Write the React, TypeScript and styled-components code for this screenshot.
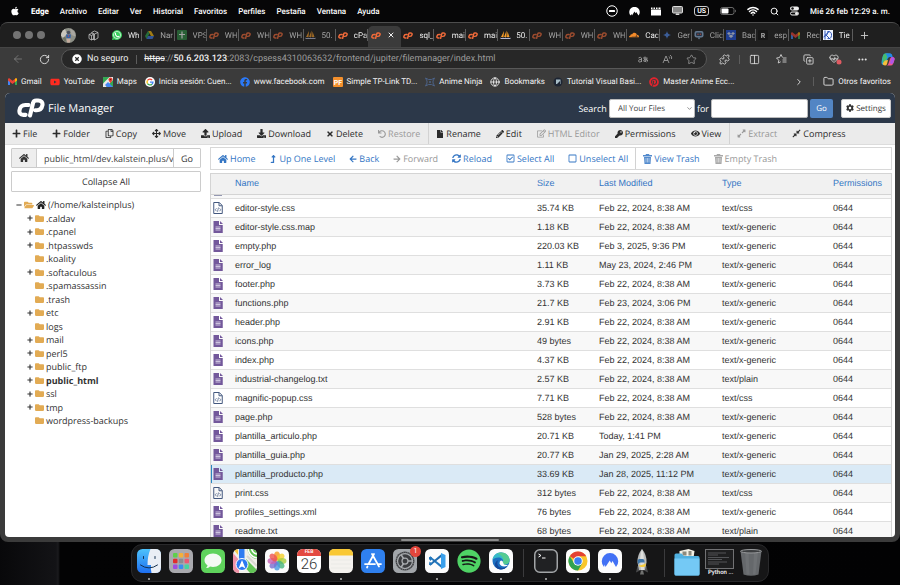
import React from 'react';
import styled, { createGlobalStyle, css } from 'styled-components';
import {
  FaApple, FaYoutube, FaFacebook, FaPinterest, FaSpotify, FaPlus, FaMinus, FaRegCopy, FaArrowsAlt,
  FaUpload, FaDownload, FaTimes, FaUndo, FaFile, FaPencilAlt, FaRegEdit, FaKey, FaEye, FaExpandAlt,
  FaCompressAlt, FaHome, FaLevelUpAlt, FaArrowLeft, FaArrowRight, FaSyncAlt, FaRegCheckSquare,
  FaRegSquare, FaCog, FaFolder, FaFolderOpen,
} from 'react-icons/fa';
import { SiCloudflare } from 'react-icons/si';
import {
  ArrowLeft, RotateCw, Star, Puzzle, Columns2, Ellipsis, Search, Wifi, ChevronRight, Folder, X, Plus,
  Globe, HeartPulse, ChevronDown, CopyPlus,
} from 'lucide-react';

const Global = createGlobalStyle`
  *, *::before, *::after { box-sizing: border-box; }
  body { margin: 0; background: #050507; overflow: hidden; text-rendering: geometricPrecision; }
  button, input, select { font: inherit; color: inherit; margin: 0; text-rendering: inherit; }
  svg { flex: none; display: block; }
`;

const ui = `Roboto, "Liberation Sans", sans-serif`;
const open = `"Open Sans", "Noto Sans", sans-serif`;

/* ---------- desktop ---------- */
const Desktop = styled.div`
  height: 100vh; display: flex; flex-direction: column; align-items: stretch; padding-bottom: 3px;
  background: linear-gradient(90deg, #08080a 0, #131316 56px, #1b1b1e 58px, #030304 60px, #020203 100%);
  font-family: ${ui};
`;
const MenuBar = styled.header`
  height: 22px; flex: none; display: flex; align-items: center; justify-content: space-between;
  background: #060607; color: #fff; padding: 0 10px; font-size: 8px; font-weight: 500;
`;
const MenuGroup = styled.nav`display: flex; align-items: center; gap: 11px;`;
const StatusGroup = styled.div`display: flex; align-items: center; gap: 11px;`;
const MenuItem = styled.button<{ $strong?: boolean }>`
  border: 0; background: none; padding: 0; white-space: nowrap; font-weight: ${p => (p.$strong ? 800 : 500)};
`;
const Lang = styled.span`
  border: 1px solid #ccc; border-radius: 3px; padding: 0 2px; font-size: 7px; line-height: 8px; font-weight: 600;
`;

/* ---------- browser ---------- */
const Browser = styled.main`
  flex: 1; min-height: 0; display: flex; flex-direction: column; background: #3b3b3b; color: #f0f0f0;
  border-radius: 8px; overflow: hidden; border-top: 1px solid #4d4d4d;
`;
const TabStrip = styled.div`
  height: 24px; flex: none; display: flex; align-items: center; background: #1f1f1f; font-size: 8px; padding-left: 13px;
`;
const Lights = styled.div`display: flex; gap: 4px;`;
const Light = styled.span`width: 8px; height: 8px; border-radius: 50%; background: #737373;`;
const Avatar = styled.span`margin-left: 16px; display: flex;`;
const Workspace = styled.span`margin: 0 11px 0 12px; display: flex;`;
const Tabs = styled.div`flex: 1; display: flex; min-width: 0; align-self: stretch;`;
const Tab = styled.button<{ $active?: boolean; $dim?: boolean }>`
  flex: 1 1 0; min-width: 0; border: 0; padding: 0 0 0 2px; display: flex; align-items: center; gap: 6px;
  background: none; overflow: hidden; color: ${p => (p.$dim ? '#a5a5a5' : '#efefef')}; position: relative;
  svg { opacity: ${p => (p.$dim ? 0.6 : 1)}; }
  &::after { content: ''; position: absolute; right: 0; top: 6px; height: 12px; width: 1px; background: #5c5c5c; }
  ${p => p.$active && css`
    background: #3b3b3b; margin-top: 3px; padding-bottom: 3px; border-radius: 5px 5px 0 0; padding-left: 3px;
    &::after { display: none; }
  `}
`;
const TabIcon = styled.span`width: 10px; flex: none; display: flex; justify-content: center;`;
const TabText = styled.span`
  flex: 1; min-width: 0; overflow: hidden; white-space: nowrap; text-align: left;
  mask-image: linear-gradient(90deg, #000 70%, #0006);
`;
const NewTab = styled.button`width: 47px; border: 0; background: none; padding: 0 0 0 6px; color: #ccc;`;
const AddressRow = styled.div`
  height: 23px; flex: none; display: flex; align-items: center; padding-left: 4px; border-top: 1px solid #454545;
`;
const ChromeButton = styled.button<{ $faded?: boolean; $narrow?: boolean }>`
  width: ${p => (p.$narrow ? 24 : 27)}px; height: 20px; padding: 0; border: 0; background: none; display: flex;
  align-items: center; justify-content: center; flex: none; color: ${p => (p.$faded ? '#858585' : '#e2e2e2')};
`;
const Pill = styled.div`
  flex: 1; height: 20px; margin: 0 4px 0 3px; display: flex; align-items: center; border: 1px solid #585858;
  border-radius: 10px; background: #272727; padding: 0 3px 0 10px; font-size: 9px; min-width: 0;
  ${ChromeButton} { width: 24px; color: #a0a0a0; }
`;
const Safety = styled.span`
  display: flex; align-items: center; gap: 5px; white-space: nowrap; color: #eee; padding-right: 7px;
`;
const Bar = styled.span`width: 1px; height: 9px; background: #5d5d5d; margin: 0 1px; flex: none;`;
const Url = styled.span`flex: 1; padding-left: 6px; color: #9c9c9c; white-space: nowrap; overflow: hidden;
  b { font-weight: 500; color: #f2f2f2; } s { color: #f2f2f2; }`;
const Bookmarks = styled.nav`
  height: 23px; flex: none; display: flex; align-items: center; gap: 8px; padding: 0 9px 0 8px;
  font-size: 8px; font-weight: 400;
`;
const Bookmark = styled.a`
  color: #f4f4f4; text-decoration: none; display: flex; align-items: center; gap: 4px; white-space: nowrap;
`;
const Spacer = styled.span`flex: 1;`;

/* ---------- page ---------- */
const Page = styled.section`
  flex: 1; min-height: 0; margin: 0 5px; border-radius: 5px 5px 4px 4px; overflow: hidden; background: #fff;
  color: #333; display: flex; flex-direction: column; font-family: ${open}; font-size: 9px;
`;
const FrameFoot = styled.div`height: 5px; flex: none; display: flex; justify-content: center; align-items: center;`;
const Grip = styled.span`width: 98px; height: 2px; border-radius: 1px; background: #8d8d8d;`;
const Header = styled.header`
  height: 30px; flex: none; background: #2c3849; color: #fff; display: flex; align-items: center; padding: 0 4px 0 12px;
`;
const Title = styled.h1`margin: 0 0 0 3px; font-size: 11px; font-weight: 400; flex: 1; white-space: nowrap;`;
const SearchForm = styled.form`display: flex; align-items: center; gap: 2px;`;
const SelectWrap = styled.span`position: relative; display: flex; color: #444;`;
const Select = styled.select`
  appearance: none; width: 86px; height: 19px; border: 1px solid #bbb; border-radius: 2px; background: #fff;
  padding: 0 8px; font-size: 8px;
`;
const Caret = styled.span`position: absolute; right: 2px; top: 6px; pointer-events: none;`;
const SearchInput = styled.input`width: 97px; height: 19px; border: 1px solid #bbb; border-radius: 2px; background: #fff; padding: 0 6px;`;
const GoButton = styled.button`
  width: 23px; height: 19px; border: 0; border-radius: 2px; background: #5285c4; color: #fff; padding: 0; font-size: 8px;
`;
const Settings = styled.button`
  width: 50px; height: 19px; border: 1px solid #ccc; border-radius: 2px; background: #fff; color: #333; margin-left: 6px;
  display: flex; align-items: center; justify-content: center; gap: 2px; padding: 0; font-size: 8px;
`;
const Toolbar = styled.div`
  height: 22px; flex: none; display: flex; background: #ebebeb; border-bottom: 1px solid #dcdcdc;
`;
const Tool = styled.button<{ $off?: boolean; $link?: boolean; $rule?: boolean }>`
  border: 0; background: none; padding: 0 ${p => (p.$link ? 7 : 8)}px 0 7px; display: flex; align-items: center;
  gap: 2px; white-space: nowrap; color: ${p => (p.$off ? '#999' : p.$link ? '#3476c4' : '#2b2b2b')};
  border-right: ${p => (p.$rule ? '1px solid #d2d2d2' : '0')};
`;
const Body = styled.div`
  flex: 1; min-height: 0; display: grid; grid-template-columns: 190px minmax(0, 1fr); column-gap: 9px; padding: 2px 3px 0 6px;
`;
const Side = styled.aside`padding-top: 1px; min-width: 0;`;
const PathForm = styled.form`display: flex; height: 20px; border: 1px solid #ccc; border-radius: 1px;`;
const PathHome = styled.button`
  width: 25px; padding: 0; border: 0; border-right: 1px solid #ccc; background: #eee; display: flex;
  align-items: center; justify-content: center; color: #333;
`;
const PathInput = styled.input`flex: 1; min-width: 0; border: 0; padding: 0 0 0 7px; color: #444; outline: 0;`;
const PathGo = styled.button`width: 27px; border: 0; border-left: 1px solid #ccc; background: #fff; padding: 0;`;
const Collapse = styled.button`
  margin-top: 3px; width: 100%; height: 21px; border: 1px solid #ccc; border-radius: 1px; background: #fff; display: block;
`;
const Tree = styled.ul`list-style: none; margin: 6px 0 0; padding: 0; line-height: 1.5; color: #333;`;
const Node = styled.li<{ $depth: number; $current?: boolean }>`
  display: flex; align-items: center; gap: 2px; padding-left: ${p => (p.$depth ? 16 : 5)}px; white-space: nowrap;
  font-weight: ${p => (p.$current ? 700 : 400)};
  svg { color: #e2ab54; }
`;
const Toggle = styled.span`
  width: 6px; display: flex; justify-content: center; svg { color: #333; }
`;
const HomeMark = styled.span`svg { color: #222; }`;
const Content = styled.div`min-width: 0; min-height: 0; display: flex; flex-direction: column; gap: 3px;`;
const Actions = styled.div`height: 23px; flex: none; display: flex; border: 1px solid #d8d8d8; background: #fff;`;
const Listing = styled.div`flex: 1; min-height: 0; overflow: hidden; border: 1px solid #d4d4d4; border-bottom: 0;
  font-family: "Liberation Sans", Arial, sans-serif; font-size: 9px; color: #333;`;
const Table = styled.table`width: 100%; table-layout: fixed; border-collapse: separate; border-spacing: 0;`;
const HeadCell = styled.th`
  height: 21px; padding: 0; text-align: left; font-weight: 400; line-height: 19px; vertical-align: top; color: #3476c4;
  background: #f1f1f1; border-bottom: 1px solid #d4d4d4;
`;
const Cell = styled.td`padding: 0; height: 19px; line-height: 18px; border-top: 1px solid #dfdfdf; white-space: nowrap;`;
const Row = styled.tr<{ $selected?: boolean }>`
  background: #fff;
  &:nth-child(odd) { background: #f8f8f8; }
  ${p => p.$selected && css`
    &&, &&:nth-child(even) { background: #daeaf6; }
    ${Cell}:first-child { box-shadow: inset 1px 0 #2a86c2; }
  `}
`;
const SliverCell = styled.td`padding: 0 0 0 2px; height: 3px; line-height: 0;`;
const FileIconBox = styled.span`display: block; padding-left: 2px;`;
const COLS = { icon: 24, size: 62, modified: 123, type: 111, perms: 58 };
const Col = styled.col<{ $w: number }>`width: ${p => p.$w}px;`;

/* ---------- dock ---------- */
const Dock = styled.footer`
  align-self: center; flex: none; margin-top: 2px; height: 38px; display: flex; gap: 8px; padding: 4px 5px 0;
  border-radius: 11px; background: #161617; border: 1px solid #29292b;
`;
const DockItem = styled.button<{ $running?: boolean }>`
  width: 24px; border: 0; background: none; padding: 0; position: relative; display: flex; flex-direction: column;
  align-items: center; gap: 5px;
  &::after { content: ''; width: 2px; height: 2px; border-radius: 1px; background: ${p => (p.$running ? '#bbb' : 'transparent')}; }
`;
const DockRule = styled.span`width: 1px; height: 28px; margin: 0 2px; background: #3b3b3d;`;
const Badge = styled.span`
  position: absolute; top: -3px; right: -4px; width: 11px; height: 11px; border-radius: 50%; background: #e3463c;
  color: #fff; font-size: 7px; line-height: 11px; text-align: center;
`;
const DockLabel = styled.span`
  position: absolute; top: 20px; left: 1px; font-size: 6px; line-height: 7px; color: #fff; white-space: nowrap; font-weight: 500;
`;
const CalendarTile = styled.span`
  width: 24px; height: 24px; flex: none; border-radius: 6px; overflow: hidden; background: #fff; color: #333; display: block; text-align: center;
  font-size: 15px; line-height: 17px; font-weight: 300;
  b { display: block; background: #e34a41; color: #fff; font-size: 5px; line-height: 7px; font-weight: 600; }
`;

/* ---------- drawings ---------- */
const CpMark = ({ w = 10, color = '#f26b3a' }: { w?: number; color?: string }) => (
  <svg width={w} height={w * 0.7} viewBox="0 0 28 20" fill="none" stroke={color} strokeWidth="4.2" strokeLinejoin="round">
    <path d="M11.6 7.2H8.2c-3.2 0-5.3 2-5.9 5.1-.6 3 .9 4.9 3.9 4.9h2.3" strokeLinecap="round" />
    <path d="M13 17.8L16.1 5.2c.4-1.800 1.500-2.600 3.200-2.600h2c3.200 0 5 2 4.300 5-.6 3.200-2.600 4.900-5.700 4.900h-1.600" strokeLinecap="round" />
  </svg>
);
const WhatsApp = () => (
  <svg width="10" height="10" viewBox="0 0 20 20">
    <path d="M10 0a10 10 0 1 1-4.800 18.800L0 20l1.300-5A10 10 0 0 1 10 0z" fill="#3bd15f" />
    <circle cx="10" cy="10" r="7.200" fill="none" stroke="#fff" strokeWidth="1.300" />
    <path d="M7 6.500q-1 3.500 2.500 6 3 1.800 4.200.2" fill="none" stroke="#fff" strokeWidth="2.200" strokeLinecap="round" />
  </svg>
);
const WorkspaceMark = () => (
  <svg width="11" height="11" viewBox="0 0 22 22" fill="none" stroke="#ccc" strokeWidth="1.500" strokeLinejoin="round">
    <path d="M7 5l6-3 7 3v11l-7 4-4-2M7 5l6 3 7-3M13 8v12M2 9l5-2 4 2v9l-4 2-5-3zM2 9l5 2 4-2M7 11v9" />
  </svg>
);
const Sails = () => (
  <svg width="11" height="10" viewBox="0 0 22 20">
    <path d="M8 2L2 14h5zM13 1L8 14h5zM15 3l-1 11h5z" fill="#f49b28" />
    <path d="M1 15q3 2 5 0 3 2 5 0 3 2 5 0 3 2 5 0v3H1z" fill="#b9bad4" />
  </svg>
);
const Sheets = () => (
  <svg width="10" height="10" viewBox="0 0 10 10"><rect width="10" height="10" rx="1" fill="#2f8a45" /><path d="M5 1.500v7M2 4.500h6" stroke="#fff" strokeWidth="1.200" /></svg>
);
const DriveMark = () => (
  <svg width="9" height="8" viewBox="0 0 18 16">
    <path d="M6 0h6l6 10h-6z" fill="#f5b90d" /><path d="M6 0l3 5-6 11-3-6z" fill="#2ba24c" /><path d="M6 10h12l-3 6H3z" fill="#3c78e6" />
  </svg>
);
const GmailMark = () => (
  <svg width="9" height="7" viewBox="0 0 18 14">
    <path d="M0 2v12h4V6z" fill="#4285f4" /><path d="M14 6v8h4V2z" fill="#34a853" />
    <path d="M0 2l0 3 9 7 9-7V2L16 0 9 5.500 2 0z" fill="#ea4335" /><path d="M14 2l2-2 2 2v3l-4 3z" fill="#fbbc04" />
  </svg>
);
const Spark = () => <svg width="8" height="8" viewBox="0 0 10 10"><path d="M5 0q.6 4.400 5 5-4.400.6-5 5Q4.400 5.600 0 5q4.400-.6 5-5z" fill="#4f87e8" /></svg>;
const Bot = () => (
  <svg width="10" height="10" viewBox="0 0 20 20"><rect x="1" y="2" width="18" height="13" rx="4" fill="#8fb1d6" /><rect x="4" y="5" width="12" height="7" rx="2" fill="#27425f" /><circle cx="8" cy="8.500" r="1.500" fill="#f05a4a" /><circle cx="13" cy="8.500" r="1.500" fill="#f05a4a" /><path d="M7 15h6l-3 4z" fill="#8fb1d6" /></svg>
);
const DropBlue = () => <svg width="10" height="10" viewBox="0 0 20 20"><rect width="20" height="20" fill="#1f52dc" /><path d="M6 4l4 3-4 3-4-3zM14 4l4 3-4 3-4-3zM10 9l5 3-5 4-5-4z" fill="#d8e2fa" /></svg>;
const LetterTile = ({ t, bg }: { t: string; bg: string }) => (
  <svg width="10" height="10" viewBox="0 0 10 10"><rect width="10" height="10" rx="1" fill={bg} /><text x="5" y="8" fontSize="7" fontWeight="700" fontFamily="Roboto" textAnchor="middle" fill="#fff">{t}</text></svg>
);
const Tienda = () => <svg width="10" height="10" viewBox="0 0 20 20"><rect width="20" height="20" fill="#f2f6ff" /><path d="M4 1v18M4 11l9-9M5 9l10 10M9 3q9 0 8 8t-8 6M1 14q8-2 10-12" stroke="#2d55b8" strokeWidth="2" fill="none" /></svg>;
const GoogleMark = () => (
  <svg width="10" height="10" viewBox="0 0 20 20"><circle cx="10" cy="10" r="10" fill="#fff" />
    <g fill="none" strokeWidth="2.600"><path d="M14.200 6A6 6 0 0 0 5 6.700" stroke="#ea4335" /><path d="M5 6.700a6 6 0 0 0 0 6.500" stroke="#fbbc04" /><path d="M5 13.200a6 6 0 0 0 9 1.200" stroke="#34a853" /><path d="M14 14.400q2-1.800 2-4.200h-6" stroke="#4285f4" /></g>
  </svg>
);
const MapsTile = () => (
  <svg width="10" height="10" viewBox="0 0 20 20"><rect width="20" height="20" rx="1" fill="#35a853" /><path d="M0 13L13 0h7v6L6 20H0z" fill="#e9e9e9" /><path d="M10 10l10 10H8l-4-4z" fill="#4285f4" /><path d="M0 8V0h8z" fill="#35a853" /><path d="M15 1a4 4 0 0 1 4 4c0 3-4 7-4 7s-4-4-4-7a4 4 0 0 1 4-4z" fill="#ea4335" /><circle cx="15" cy="5" r="1.500" fill="#7d1c14" /></svg>
);
const Ninja = () => <svg width="10" height="10" viewBox="0 0 20 20"><path d="M1 2l6 3h6l6-3-3 6v4l3 6-6-3H7l-6 3 3-6V8z" fill="none" stroke="#4c6286" strokeWidth="2" /><circle cx="10" cy="10" r="2" fill="#4c6286" /></svg>;
const Tutorial = () => <svg width="10" height="10" viewBox="0 0 20 20"><circle cx="10" cy="10" r="9" fill="#1d2533" /><rect x="6" y="5" width="9" height="9" fill="#a7bdc7" /><path d="M8 14l6-6v6z" fill="#1d2533" /></svg>;
const AvatarPic = () => (
  <svg width="15" height="15" viewBox="0 0 30 30"><circle cx="15" cy="15" r="15" fill="#8c8f86" /><path d="M0 15a15 15 0 0 1 8-13l4 10-8 8z" fill="#c9c6bd" /><path d="M18 1l9 6 2 10-8-3z" fill="#a9a6a0" /><path d="M3 20l6-3 2 11q-6-2-8-8z" fill="#6d7264" /><circle cx="15" cy="9" r="3.500" fill="#4a4f5c" /><path d="M10 13h10l-1 8h-8z" fill="#3562a6" /><path d="M11 21h8l-1 8h-6z" fill="#c4ab9c" /><circle cx="15" cy="16" r="1.500" fill="#c0504b" /></svg>
);
const Translate = () => <svg width="12" height="9" viewBox="0 0 24 18" fill="none" stroke="currentColor" strokeWidth="1.700"><path d="M3 6q4-3 6 0v8M9 9q-6-1-6 3t6 1M12 6h9M16 3q-1 7 1 11M20 7q-1 6-5 6t0-4q5-2 6 1t-2 4" /></svg>;
const ReadAloud = () => <svg width="11" height="10" viewBox="0 0 22 20" fill="none" stroke="currentColor" strokeWidth="1.700"><path d="M2 18L8 4l6 14M4 13h8M14 5q2 2 1 4M16 2q5 3 3 8" /></svg>;
const FavList = () => <svg width="11" height="10" viewBox="0 0 22 20" fill="none" stroke="currentColor" strokeWidth="1.600" strokeLinejoin="round"><path d="M13 7L10 1 7 7l-6 1 4.500 4.500L4.500 18l5-2.500M14 8h7M13 12h8M13 16h8" /></svg>;
const HeartAlert = () => <svg width="13" height="12" viewBox="0 0 26 24"><HeartPulse size={20} x="0" y="1" strokeWidth={2} color="#e2e2e2" /><circle cx="20" cy="18" r="5" fill="#e05b62" /></svg>;
const Copilot = () => (
  <svg width="14" height="13" viewBox="0 0 28 26"><path d="M9 1h9q3 0 4 3l1 4h-6q-3 0-4 4l-3 9q-1 3-4 3Q1 24 1 19 2 10 4 5 5 1 9 1z" fill="#1e9bea" /><path d="M3 9Q5 1 9 1h6l-5 14q-2 7-7 4z" fill="#46bb6e" /><path d="M9 1h9q3 0 4 3l1 4h-6q-2 0-3 1z" fill="#2488e8" /><path d="M19 25h-8q3 0 4-4l3-9q1-4 5-4 5 0 4 5-1 6-3 9-1 3-5 3z" fill="#f0568d" /><path d="M21 8q7 0 6 5l-3 8q-3 2-6-1l2-10z" fill="#b155e6" /><path d="M8 15l6-1-2 8q-1 3-4 3-4 0-5-4z" fill="#f6bd3a" /></svg>
);
const Nord = () => (
  <svg width="11" height="9" viewBox="0 0 22 18"><path d="M3 17A10.500 10.500 0 1 1 19 17l-4.500-7-1.500 2.500L11 9l-5 8-1-3z" fill="#fff" /></svg>
);
const SettingsToggles = () => <svg width="9" height="10" viewBox="0 0 18 20"><rect x="0" y="1" width="18" height="8" rx="4" fill="#eee" /><circle cx="5" cy="5" r="2.500" fill="#111" /><rect x="1" y="12" width="16" height="6" rx="3" fill="none" stroke="#eee" strokeWidth="2" /><circle cx="13" cy="15" r="3" fill="#eee" /></svg>;
const Battery = () => <svg width="16" height="8" viewBox="0 0 32 16"><rect x="1" y="1" width="27" height="14" rx="4" fill="none" stroke="#888" strokeWidth="1.500" /><rect x="3" y="3" width="14" height="10" rx="2" fill="#fff" /><path d="M30 5q3 3 0 6z" fill="#888" /></svg>;
const NoEntry = () => <svg width="12" height="12" viewBox="0 0 24 24"><circle cx="12" cy="12" r="10.500" fill="none" stroke="#fff" strokeWidth="2" /><rect x="6" y="10" width="12" height="4" rx="1" fill="#fff" /></svg>;
const Clap = () => <svg width="10" height="9" viewBox="0 0 20 18"><path d="M0 5h20v12H0zM0 1h3v3H0zM5 1h3v3H5zM10 1h3v3h-3zM15 1h4v3h-4z" fill="#fff" /></svg>;
const Screen = () => <svg width="11" height="10" viewBox="0 0 22 20"><rect x="1" y="1" width="20" height="13" rx="2" fill="#888" stroke="#ddd" strokeWidth="2" /><path d="M7 18h8l-1-3H8z" fill="#ddd" /></svg>;
const Unsafe = () => <svg width="10" height="10" viewBox="0 0 20 20"><circle cx="10" cy="10" r="9.500" fill="#fff" /><path d="M6.500 6.500l7 7M13.500 6.500l-7 7" stroke="#272727" strokeWidth="2.500" /></svg>;
const TrashCan = () => <svg width="9" height="10" viewBox="0 0 18 20"><path d="M6 0h6l1 2h5v3H0V2h5zM2 6h14l-1 14H3z" fill="currentColor" opacity="0.85" /><path d="M6 8v9M9 8v9M12 8v9" stroke="#fff" strokeWidth="1" /></svg>;

const CodeFile = () => (
  <svg width="10" height="12" viewBox="0 0 20 24" fill="none" stroke="#44587f" strokeWidth="2" strokeLinejoin="round"><path d="M1.500 1h11l6 6v16h-17zM12 1v6.500h6" /><path d="M7 12.500l-2.500 3 2.500 3M13 12.500l2.500 3-2.500 3M11 11l-2 8.500" strokeWidth="1.400" strokeLinejoin="miter" /></svg>
);
const TextFile = () => (
  <svg width="10" height="12" viewBox="0 0 20 24"><path d="M1 0h11v8h7.500v16H1z" fill="#73589b" /><path d="M14 0l6 6h-6z" fill="#73589b" /><path d="M5 12h10M5 15h10M5 18h10" stroke="#e6dff0" strokeWidth="1.600" /></svg>
);

const Tile = ({ children, bg }: { children: React.ReactNode; bg: string }) => (
  <svg width="24" height="24" viewBox="0 0 48 48"><rect width="48" height="48" rx="11" fill={bg} />{children}</svg>
);
const Finder = () => (
  <svg width="24" height="24" viewBox="0 0 48 48"><defs><linearGradient id="fb" x2="0" y2="1"><stop stopColor="#4ec3fb" /><stop offset="1" stopColor="#1d6ef0" /></linearGradient></defs>
    <rect width="48" height="48" rx="11" fill="url(#fb)" /><path d="M27 0h10q11 0 11 11v26q0 11-11 11h-8q-2-8-1-16h-7Q21 14 27 0z" fill="#e9eef5" />
    <path d="M13 15v4M36 15v4M7 32q17 12 34 0" stroke="#14304f" strokeWidth="2" fill="none" strokeLinecap="round" /></svg>
);
const padColors = ['#5fd04b', '#f4b03b', '#f0803a', '#e02d2d', '#8c8c93', '#ea5a74', '#a14be0', '#3a8ff0', '#45d5a0'];
const Launchpad = () => <Tile bg="#a9a9ae">{padColors.map((c, i) => <rect key={c} x={8 + (i % 3) * 11.5} y={8 + Math.floor(i / 3) * 11.5} width="9" height="9" rx="2" fill={c} />)}</Tile>;
const Messages = () => <Tile bg="#5fd35c"><path d="M24 9c10 0 17 6 17 13.500S34 36 24 36c-2 0-4-.3-6-.9-2 2-5 3-8 3 2-2 3-4 3-5.500-4-2.500-6-6-6-10C7 15 14 9 24 9z" fill="#f4faf3" /></Tile>;
const AppleMaps = () => (
  <svg width="24" height="24" viewBox="0 0 48 48"><defs><clipPath id="mc"><rect width="48" height="48" rx="11" /></clipPath></defs><g clipPath="url(#mc)">
    <rect width="48" height="48" fill="#f1f0ea" /><path d="M28 0h20v20q-14 0-20-20z" fill="#61c554" /><path d="M30 0q4 16 18 18M37 0q3 9 11 10" stroke="#fff" strokeWidth="3" fill="none" /><path d="M0 8l12 14v26H0z" fill="#f093a8" /><path d="M0 0h10v12z" fill="#f7c948" /><path d="M12 0h11v24H12z" fill="#2f7cf1" /><path d="M26 20l22 22v6H34L20 32z" fill="#62c556" /><path d="M28 14l20 20" stroke="#d9d8d0" strokeWidth="4" /><circle cx="18" cy="31" r="12" fill="#2a79f2" stroke="#fff" strokeWidth="2" /><path d="M18 22l7 17-7-4-7 4z" fill="#fff" /></g></svg>
);
const petals = ['#f59a23', '#f3cf2d', '#a8ce3f', '#48b57f', '#4b98e0', '#7a6fd1', '#c763b3', '#ee5750'];
const Photos = () => <Tile bg="#fbfbfb">{petals.map((c, i) => <ellipse key={c} cx="24" cy="14" rx="6" ry="9" fill={c} opacity="0.82" transform={`rotate(${i * 45} 24 24)`} />)}</Tile>;
const Notes = () => <Tile bg="#f4f2ee"><path d="M0 13V11Q0 0 11 0h26q11 0 11 11v2z" fill="#f9c834" /><path d="M4 22h40M4 30h40M4 38h40" stroke="#e2e0dc" /></Tile>;
const AppStore = () => <Tile bg="#2f80ee"><g stroke="#fff" strokeWidth="3.500" strokeLinecap="round" fill="none"><path d="M26 10L15 30M22 10l14 25M8 30h20M34 30h6M13 35l-1 2" /></g></Tile>;
const Gear = () => (
  <Tile bg="#a2a6aa"><circle cx="24" cy="24" r="19" fill="#3a3c3f" /><circle cx="24" cy="24" r="15" fill="none" stroke="#a8abae" strokeWidth="2.500" /><circle cx="24" cy="24" r="18" fill="none" stroke="#85888b" strokeWidth="2" strokeDasharray="2 2" /><circle cx="24" cy="24" r="6" fill="none" stroke="#a8abae" strokeWidth="2.500" /><path d="M30 24h9M21 19l-5-8M21 29l-5 8" stroke="#a8abae" strokeWidth="3" /></Tile>
);
const VsCode = () => (
  <Tile bg="#fcfcfc"><path d="M8 17l3-2 23 18v6z" fill="#2277bd" /><path d="M8 31l3 2 23-18V9z" fill="#1f6cb0" /><path d="M8 17l3-2 3 2v3l-3 4-3-4zM8 31l3 2 4-3-6-5z" fill="#2277bd" /><path d="M32 8l9 4v24l-9 4z" fill="#3aa0ec" /></Tile>
);
const EdgeMark = () => (
  <Tile bg="#fcfcfc"><circle cx="24" cy="24" r="17" fill="#1b6fc0" /><path d="M7 22C8 12 15 7 24 7c10 0 17 7 17 15 0 6-4 9-9 9-4 0-6-2-4-5 1-6-4-9-9-9-6 0-10 2-12 5z" fill="#38b9c8" /><path d="M24 7c10 0 17 7 17 15 0 6-4 9-9 9-4 0-6-2-4-5 2-6 0-13-12-17z" fill="#5bcf83" opacity="0.8" /><path d="M19 22q-5 6 0 13 7 6 18-1-6 8-15 7-11-2-10-12 2-6 7-7z" fill="#12489a" /><path d="M24 23q4 0 4 4 1 5 6 5 3 0 5-1-3 4-8 4-8 0-10-6 0-5 3-6z" fill="#fcfcfc" /></Tile>
);
const Terminal = () => (
  <svg width="24" height="24" viewBox="0 0 48 48"><rect x="1.500" y="1.500" width="45" height="45" rx="10" fill="#202123" stroke="#a2a5a7" strokeWidth="3" /><path d="M9 10l5 3-5 3M16 18h7" stroke="#fff" strokeWidth="2" fill="none" /></svg>
);
const Chrome = () => (
  <Tile bg="#fcfcfc"><circle cx="24" cy="24" r="19" fill="#f9c62b" /><path d="M24 24L7.500 14.500A19 19 0 0 1 40.500 14.500H24z" fill="#e34133" /><path d="M7.500 14.500A19 19 0 0 0 24 43l8.500-14.500L16 28z" fill="#31a352" /><circle cx="24" cy="24" r="9.500" fill="#fff" /><circle cx="24" cy="24" r="7.500" fill="#3b7ef0" /></Tile>
);
const NordTile = () => <Tile bg="#fcfcfc"><path d="M12 36A16.500 16.500 0 1 1 36 36l-7-12-2.500 4.500L23.500 23 15 36l-1.500-5z" fill="#4271f5" /></Tile>;
const Rocket = () => (
  <svg width="24" height="26" viewBox="0 0 48 52"><path d="M15 34l-3 13 8-4h8l8 4-3-13z" fill="#4c4d4f" /><path d="M24 0q10 12 9 27l-3 15H18l-3-15Q14 12 24 0z" fill="#b9bcbc" /><path d="M24 0q5 12 4 42h-6Q18 15 24 0z" fill="#dedfdd" /><path d="M18 20h7q4 0 4 4v3h-8q-4 0-4 4-4-9 1-11z" fill="#3c75a8" /><path d="M31 27q2 9-4 9h-5q-4 0-4-4 4 1 8-1 5 0 5-4z" fill="#f4cc3e" /><path d="M22 43h4l2 8h-8z" fill="#707170" /></svg>
);
const FolderPic = () => (
  <svg width="26" height="27" viewBox="0 0 52 54"><path d="M11 4l18-4 12 4-2 14H11z" fill="#f3f1e6" /><path d="M17 5h8v8h-8zM29 4h6v9h-6z" fill="#8c8a7d" /><path d="M1 12q0-3 3-3h11l5 5h28q3 0 3 3v33q0 3-3 3H4q-3 0-3-3z" fill="#4fb0e0" /><path d="M1 19h50v31q0 3-3 3H4q-3 0-3-3z" fill="#74c9f5" /></svg>
);
const PyWindow = () => (
  <svg width="29" height="20" viewBox="0 0 58 40"><rect x="1" y="1" width="56" height="38" fill="#1f1f20" stroke="#727274" strokeWidth="2" /><path d="M6 8h36M6 12h20M6 17h42M6 21h28M6 26h38M6 30h22" stroke="#66676a" strokeWidth="1.500" /></svg>
);
const Trash = () => (
  <svg width="24" height="27" viewBox="0 0 48 54"><path d="M3 4h42l-6 47q-15 5-30 0z" fill="#65686b" /><path d="M12 6h7l2 45h-6zM30 6h8l-5 45h-5z" fill="#6e7174" /><ellipse cx="24" cy="4.500" rx="21" ry="3.500" fill="#3c3e40" stroke="#97999b" strokeWidth="2" /></svg>
);

/* ---------- data ---------- */
const menus = ['Archivo', 'Editar', 'Ver', 'Historial', 'Favoritos', 'Perfiles', 'Pestaña', 'Ventana', 'Ayuda'];
const tabs: { icon: React.ReactNode; text?: string; dim?: boolean; active?: boolean }[] = [
  { icon: <WhatsApp />, text: 'Wh' },
  { icon: <DriveMark />, text: 'Nar', dim: true },
  { icon: <Sheets />, text: 'VPS', dim: true },
  { icon: <CpMark />, text: 'WH', dim: true },
  { icon: <CpMark />, text: 'WH', dim: true },
  { icon: <CpMark />, text: 'WH', dim: true },
  { icon: <Sails />, text: '50.', dim: true },
  { icon: <CpMark />, text: 'cPa' },
  { icon: <CpMark />, active: true },
  { icon: <CpMark />, text: 'sql_' },
  { icon: <CpMark />, text: 'mai' },
  { icon: <CpMark />, text: 'mai' },
  { icon: <Sails />, text: '50.' },
  { icon: <CpMark />, text: 'WH', dim: true },
  { icon: <CpMark />, text: 'WH', dim: true },
  { icon: <CpMark />, text: 'WH', dim: true },
  { icon: <SiCloudflare size={10} color="#f38b2a" />, text: 'Cac' },
  { icon: <Spark />, text: 'Ger', dim: true },
  { icon: <Bot />, text: 'Clic', dim: true },
  { icon: <DropBlue />, text: 'Bac', dim: true },
  { icon: <LetterTile t="R" bg="#111" />, text: 'esp', dim: true },
  { icon: <GmailMark />, text: 'Rec', dim: true },
  { icon: <Tienda />, text: 'Tie' },
];
const bookmarks: [React.ReactNode, string][] = [
  [<GmailMark />, 'Gmail'],
  [<FaYoutube size={10} color="#ff2b20" />, 'YouTube'],
  [<MapsTile />, 'Maps'],
  [<GoogleMark />, 'Inicia sesión: Cuen...'],
  [<FaFacebook size={10} color="#2b78f5" />, 'www.facebook.com'],
  [<LetterTile t="PF" bg="#f4902c" />, 'Simple TP-Link TD...'],
  [<Ninja />, 'Anime Ninja'],
  [<Globe size={10} />, 'Bookmarks'],
  [<Tutorial />, 'Tutorial Visual Basi...'],
  [<FaPinterest size={10} color="#e0242e" />, 'Master Anime Ecc...'],
];
type ToolDef = [React.ReactNode, string, ('off' | 'rule' | 'offrule')?];
const tools: ToolDef[] = [
  [<FaPlus size={9} />, 'File'], [<FaPlus size={9} />, 'Folder'], [<FaRegCopy size={9} />, 'Copy'],
  [<FaArrowsAlt size={9} />, 'Move'], [<FaUpload size={9} />, 'Upload'], [<FaDownload size={9} />, 'Download'],
  [<FaTimes size={8} />, 'Delete'], [<FaUndo size={8} />, 'Restore', 'offrule'], [<FaFile size={8} />, 'Rename'],
  [<FaPencilAlt size={8} />, 'Edit'], [<FaRegEdit size={9} />, 'HTML Editor', 'off'], [<FaKey size={8} />, 'Permissions'],
  [<FaEye size={9} />, 'View', 'rule'], [<FaExpandAlt size={9} />, 'Extract', 'off'], [<FaCompressAlt size={9} />, 'Compress'],
];
const actions: ToolDef[] = [
  [<FaHome size={10} />, 'Home'], [<FaLevelUpAlt size={8} />, 'Up One Level'], [<FaArrowLeft size={8} />, 'Back'],
  [<FaArrowRight size={8} />, 'Forward', 'off'], [<FaSyncAlt size={9} />, 'Reload'], [<FaRegCheckSquare size={9} />, 'Select All'],
  [<FaRegSquare size={9} />, 'Unselect All', 'rule'], [<TrashCan />, 'View Trash'], [<TrashCan />, 'Empty Trash', 'off'],
];
const folders: [string, boolean][] = [
  ['.caldav', true], ['.cpanel', true], ['.htpasswds', true], ['.koality', false], ['.softaculous', true],
  ['.spamassassin', false], ['.trash', false], ['etc', true], ['logs', false], ['mail', true], ['perl5', true],
  ['public_ftp', true], ['public_html', true], ['ssl', true], ['tmp', true], ['wordpress-backups', false],
];
const files: [string, string, string, string][] = [
  ['editor-style.css', '35.74 KB', 'Feb 22, 2024, 8:38 AM', 'text/css'],
  ['editor-style.css.map', '1.18 KB', 'Feb 22, 2024, 8:38 AM', 'text/x-generic'],
  ['empty.php', '220.03 KB', 'Feb 3, 2025, 9:36 PM', 'text/x-generic'],
  ['error_log', '1.11 KB', 'May 23, 2024, 2:46 PM', 'text/x-generic'],
  ['footer.php', '3.73 KB', 'Feb 22, 2024, 8:38 AM', 'text/x-generic'],
  ['functions.php', '21.7 KB', 'Feb 23, 2024, 3:06 PM', 'text/x-generic'],
  ['header.php', '2.91 KB', 'Feb 22, 2024, 8:38 AM', 'text/x-generic'],
  ['icons.php', '49 bytes', 'Feb 22, 2024, 8:38 AM', 'text/x-generic'],
  ['index.php', '4.37 KB', 'Feb 22, 2024, 8:38 AM', 'text/x-generic'],
  ['industrial-changelog.txt', '2.57 KB', 'Feb 22, 2024, 8:38 AM', 'text/plain'],
  ['magnific-popup.css', '7.71 KB', 'Feb 22, 2024, 8:38 AM', 'text/css'],
  ['page.php', '528 bytes', 'Feb 22, 2024, 8:38 AM', 'text/x-generic'],
  ['plantilla_articulo.php', '20.71 KB', 'Today, 1:41 PM', 'text/x-generic'],
  ['plantilla_guia.php', '20.77 KB', 'Jan 29, 2025, 2:28 AM', 'text/x-generic'],
  ['plantilla_producto.php', '33.69 KB', 'Jan 28, 2025, 11:12 PM', 'text/x-generic'],
  ['print.css', '312 bytes', 'Feb 22, 2024, 8:38 AM', 'text/css'],
  ['profiles_settings.xml', '76 bytes', 'Feb 22, 2024, 8:38 AM', 'text/x-generic'],
  ['readme.txt', '68 bytes', 'Feb 22, 2024, 8:38 AM', 'text/plain'],
];
const dockApps: ([React.ReactNode, string, boolean?] | null)[] = [
  [<Finder />, 'Finder', true], [<Launchpad />, 'Launchpad'], [<Messages />, 'Messages'], [<AppleMaps />, 'Maps'], [<Photos />, 'Photos'],
  [<CalendarTile><b>FEB</b>26</CalendarTile>, 'Calendar'], [<Notes />, 'Notes', true], [<AppStore />, 'App Store'],
  [<><Gear /><Badge>1</Badge></>, 'Settings'], [<VsCode />, 'Code', true], [<FaSpotify size={24} color="#4fd365" />, 'Spotify'],
  [<EdgeMark />, 'Edge', true], null, [<Terminal />, 'Terminal', true], [<Chrome />, 'Chrome', true], [<NordTile />, 'VPN', true],
  [<Rocket />, 'Launcher'], null, [<FolderPic />, 'Folder'], [<><PyWindow /><DockLabel>Python ...</DockLabel></>, 'Python'], [<Trash />, 'Trash'],
];

const renderTools = (list: ToolDef[], link?: boolean) => list.map(([icon, label, mode]) => (
  <Tool key={label} type="button" $link={link} $off={mode === 'off' || mode === 'offrule'} $rule={mode === 'rule' || mode === 'offrule'}>
    {icon}{label}
  </Tool>
));

export default function App() {
  return (
    <Desktop>
      <Global />
      <MenuBar>
        <MenuGroup>
          <FaApple size={10} />
          <MenuItem $strong>Edge</MenuItem>
          {menus.map(m => <MenuItem key={m}>{m}</MenuItem>)}
        </MenuGroup>
        <StatusGroup>
          <NoEntry /><Nord /><Clap /><Screen /><Lang>US</Lang><Battery /><Wifi size={12} strokeWidth={3} /><Search size={9} strokeWidth={2.5} /><SettingsToggles />
          <span>Mié 26 feb 12:29 a. m.</span>
        </StatusGroup>
      </MenuBar>

      <Browser>
        <TabStrip>
          <Lights><Light /><Light /><Light /></Lights>
          <Avatar><AvatarPic /></Avatar>
          <Workspace><WorkspaceMark /></Workspace>
          <Tabs>
            {tabs.map((t, i) => (
              <Tab key={i} type="button" $active={t.active} $dim={t.dim} aria-label={t.text || 'File Manager'}>
                <TabIcon>{t.icon}</TabIcon>{t.active ? <X size={8} strokeWidth={3} /> : <TabText>{t.text}</TabText>}
              </Tab>
            ))}
          </Tabs>
          <NewTab type="button" aria-label="Nueva pestaña"><Plus size={11} /></NewTab>
        </TabStrip>
        <AddressRow>
          <ChromeButton $faded aria-label="Atrás"><ArrowLeft size={12} strokeWidth={1.5} /></ChromeButton>
          <ChromeButton aria-label="Recargar"><RotateCw size={11} strokeWidth={2} /></ChromeButton>
          <Pill>
            <Safety><Unsafe />No seguro</Safety>
            <Bar />
            <Url><s>https</s>://<b>50.6.203.123</b>:2083/cpsess4310063632/frontend/jupiter/filemanager/index.html</Url>
            <ChromeButton aria-label="Traducir"><Translate /></ChromeButton>
            <ChromeButton aria-label="Leer en voz alta"><ReadAloud /></ChromeButton>
            <ChromeButton aria-label="Favorito"><Star size={11} strokeWidth={1.7} /></ChromeButton>
          </Pill>
          <ChromeButton aria-label="Extensiones"><Puzzle size={11} strokeWidth={1.8} /></ChromeButton>
          <Bar />
          <ChromeButton aria-label="Pantalla dividida"><Columns2 size={11} strokeWidth={1.8} /></ChromeButton>
          <ChromeButton aria-label="Favoritos"><FavList /></ChromeButton>
          <ChromeButton aria-label="Colecciones"><CopyPlus size={11} strokeWidth={1.8} /></ChromeButton>
          <ChromeButton aria-label="Rendimiento"><HeartAlert /></ChromeButton>
          <ChromeButton aria-label="Más"><Ellipsis size={11} strokeWidth={2.5} /></ChromeButton>
          <ChromeButton $narrow aria-label="Copilot"><Copilot /></ChromeButton>
        </AddressRow>
        <Bookmarks>
          {bookmarks.map(([icon, text]) => <Bookmark key={text} href="#">{icon}{text}</Bookmark>)}
          <Spacer />
          <ChevronRight size={10} />
          <Bar />
          <Bookmark href="#"><Folder size={11} strokeWidth={1.8} />Otros favoritos</Bookmark>
        </Bookmarks>

        <Page>
          <Header>
            <CpMark w={28} color="#fff" />
            <Title>File Manager</Title>
            <SearchForm>
              <label htmlFor="scope">Search</label>
              <SelectWrap>
                <Select id="scope" defaultValue="all"><option value="all">All Your Files</option></Select>
                <Caret><ChevronDown size={7} /></Caret>
              </SelectWrap>
              <label htmlFor="term">for</label>
              <SearchInput id="term" type="text" />
              <GoButton type="button">Go</GoButton>
              <Settings type="button"><FaCog size={8} />Settings</Settings>
            </SearchForm>
          </Header>
          <Toolbar>{renderTools(tools)}</Toolbar>
          <Body>
            <Side>
              <PathForm>
                <PathHome type="button" aria-label="Home"><FaHome size={10} /></PathHome>
                <PathInput aria-label="Path" defaultValue="public_html/dev.kalstein.plus/v" />
                <PathGo type="button">Go</PathGo>
              </PathForm>
              <Collapse type="button">Collapse All</Collapse>
              <Tree>
                <Node $depth={0}>
                  <Toggle><FaMinus size={6} /></Toggle><FaFolderOpen size={10} /><HomeMark><FaHome size={10} /></HomeMark>(/home/kalsteinplus)
                </Node>
                {folders.map(([name, kids]) => (
                  <Node key={name} $depth={1} $current={name === 'public_html'}>
                    <Toggle>{kids && <FaPlus size={6} />}</Toggle><FaFolder size={9} />{name}
                  </Node>
                ))}
              </Tree>
            </Side>
            <Content>
              <Actions>{renderTools(actions, true)}</Actions>
              <Listing>
                <Table>
                  <colgroup>
                    <Col $w={COLS.icon} /><col /><Col $w={COLS.size} /><Col $w={COLS.modified} /><Col $w={COLS.type} /><Col $w={COLS.perms} />
                  </colgroup>
                  <thead>
                    <tr><HeadCell /><HeadCell>Name</HeadCell><HeadCell>Size</HeadCell><HeadCell>Last Modified</HeadCell><HeadCell>Type</HeadCell><HeadCell>Permissions</HeadCell></tr>
                  </thead>
                  <tbody>
                    <Row><SliverCell colSpan={6}><svg width="10" height="3" viewBox="0 0 10 3"><path d="M1 0h8" stroke="#73789b" strokeWidth="1.500" /></svg></SliverCell></Row>
                    {files.map(([name, size, modified, type]) => (
                      <Row key={name} $selected={name === 'plantilla_producto.php'}>
                        <Cell><FileIconBox>{type === 'text/css' ? <CodeFile /> : <TextFile />}</FileIconBox></Cell>
                        <Cell>{name}</Cell><Cell>{size}</Cell><Cell>{modified}</Cell><Cell>{type}</Cell><Cell>0644</Cell>
                      </Row>
                    ))}
                  </tbody>
                </Table>
              </Listing>
            </Content>
          </Body>
        </Page>
        <FrameFoot><Grip /></FrameFoot>
      </Browser>

      <Dock>
        {dockApps.map((a, i) => (a ? <DockItem key={i} aria-label={a[1]} $running={a[2]}>{a[0]}</DockItem> : <DockRule key={i} />))}
      </Dock>
    </Desktop>
  );
}
